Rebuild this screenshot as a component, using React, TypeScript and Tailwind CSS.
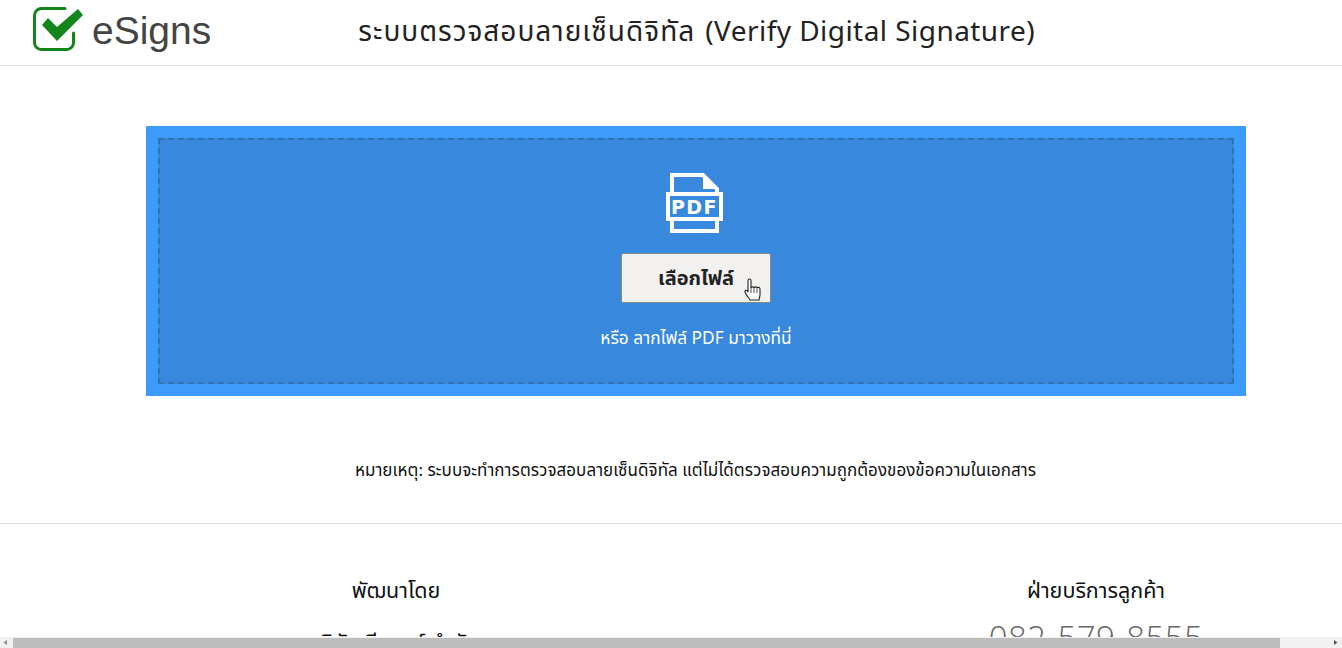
export default function App() {
  return (
    <div className="relative h-[648px] w-[1342px] overflow-hidden bg-white font-['Noto_Sans','Noto_Sans_Thai','Liberation_Sans',sans-serif] text-[#111]">
      <header className="flex h-[66px] items-start border-b border-[#e2e2e2]">
        <div className="ml-[32px] mt-[6px] flex items-center">
          <svg width="52" height="46" viewBox="0 0 52 46" className="shrink-0">
            <path d="M41.500 27v9.500a7 7 0 0 1-7 7H9.500a7 7 0 0 1-7-7V9.500a7 7 0 0 1 7-7H33" fill="none" stroke="#14851a" strokeWidth="3" strokeLinecap="round" />
            <path d="M10 19l6-7 9 9L46 3l5 6-26 26z" fill="#14851a" />
          </svg>
        </div>
        <span className="ml-[8px] mt-[9px] font-['Liberation_Sans',sans-serif] text-[39px] leading-[44px] text-[#444]">eSigns</span>
        <h1 className="ml-[147px] mt-[11px] flex whitespace-nowrap text-[28px] leading-[38px] font-normal text-[#222]">
          <span className="tracking-[1px]">ระบบตรวจสอบลายเซ็นดิจิทัล</span>
          <span className="ml-[10px] tracking-[0.45px]">(Verify Digital Signature)</span>
        </h1>
      </header>

      <main className="px-[146px] pt-[60px] pr-[96px]">
        <div className="h-[270px] w-[1100px] bg-[#3d9bfb] p-[12px]">
          <div className="flex h-[246px] flex-col items-center border-2 border-dashed border-[#2f73b6] bg-[#3889de]">
            <svg width="58" height="61" viewBox="0 0 58 61" className="mr-[3px] mt-[33px]">
              <path d="M6 20V2h31l14 14v4M6 48v10h45V48" fill="none" stroke="#fff" strokeWidth="4" />
              <path d="M37 2v14h14z" fill="#fff" />
              <rect x="2" y="21" width="53" height="25" fill="none" stroke="#fff" strokeWidth="4" />
              <text x="28.500" y="40.500" textAnchor="middle" fill="#fff" fontSize="19" fontWeight="800" letterSpacing="1.500" fontFamily="DejaVu Sans, sans-serif">PDF</text>
            </svg>
            <div className="relative mt-[19px]">
              <button className="flex h-[50px] w-[150px] items-center justify-center rounded-[2px] border border-[#8a8a8a] bg-[#f3f1ef] text-[20px] font-bold text-[#222]">เลือกไฟล์</button>
              <svg width="18" height="24" viewBox="0 0 18 24" className="absolute left-[123px] top-[25px]">
                <path d="M4 2.500c0-2 3-2 3 0V10c0-1.500 3-1.500 3 0 0-1.500 3-1.500 3 0 0-1 3-1 3 1v6c0 2-1 3-1 5H6c-1-2-4-5-5-8-.5-1.500 1-2.500 3-.5z" fill="#fff" stroke="#222" strokeWidth="1.100" />
                <path d="M7 10v5M10 10v5M13 10v5" stroke="#222" strokeWidth=".8" />
              </svg>
            </div>
            <p className="mt-[24px] text-[17.3px] leading-[22px] text-white">หรือ ลากไฟล์ PDF มาวางที่นี่</p>
          </div>
        </div>
      </main>

      <p className="mt-[62px] pl-[49px] text-center text-[17px] leading-[24px] tracking-[0.04px] whitespace-nowrap">หมายเหตุ: ระบบจะทำการตรวจสอบลายเซ็นดิจิทัล แต่ไม่ได้ตรวจสอบความถูกต้องของข้อความในเอกสาร</p>

      <footer className="mt-[41px] flex border-t border-[#e2e2e2] pt-[52px]">
        <div className="ml-[146px] w-[500px] text-center">
          <h2 className="text-[21.500px] leading-[28px] font-normal">พัฒนาโดย</h2>
          <p className="mt-[23px] pr-[5px] text-[22px] leading-[28px]">บริษัท อีซายน์ จำกัด</p>
        </div>
        <div className="ml-[250px] w-[400px] text-center">
          <h2 className="text-[21.500px] leading-[28px] font-normal">ฝ่ายบริการลูกค้า</h2>
          <p className="mt-[14px] font-['Open_Sans',sans-serif] text-[33px] leading-[40px] font-light tracking-[0.4px] text-[#666]">082-579-8555</p>
        </div>
      </footer>

      <div className="absolute bottom-0 left-0 flex h-[11px] w-full items-center bg-[#f1f1f1]">
        <svg width="13" height="11" viewBox="0 0 13 11" className="shrink-0"><path d="M7 3v5L3.500 5.500z" fill="#8a8a8a" /></svg>
        <div className="h-[10px] w-[1267px] self-end bg-[#bdbdbd]" />
        <div className="flex-1" />
        <svg width="12" height="11" viewBox="0 0 12 11" className="shrink-0"><path d="M4 3v5l3.500-2.500z" fill="#555" /></svg>
      </div>
    </div>
  );
}
